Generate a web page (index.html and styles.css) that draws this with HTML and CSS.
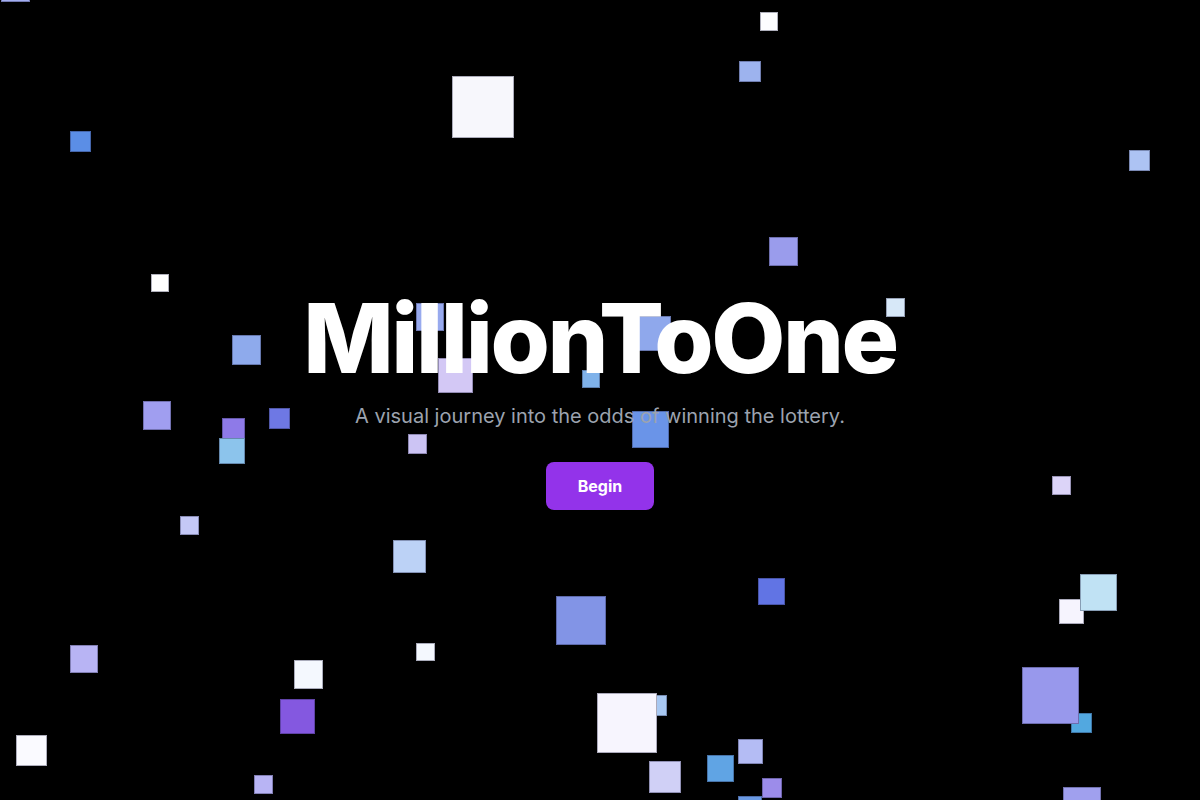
FILE: index.html
```html
<!DOCTYPE html>
<html lang="en">
<head>
<meta charset="utf-8">
<title>MillionToOne</title>
<link rel="stylesheet" href="styles.css">
</head>
<body>
<main class="stage">
  <div class="field" aria-hidden="true">
    <span class="sq" style="left:1px;top:-28px;width:29px;height:30px;background:#a3aef0"></span>
    <span class="sq" style="left:760px;top:12px;width:18px;height:19px;background:#fcfdff"></span>
    <span class="sq" style="left:739px;top:61px;width:22px;height:21px;background:#9db3ee"></span>
    <span class="sq" style="left:452px;top:76px;width:62px;height:62px;background:#f7f7fc"></span>
    <span class="sq" style="left:70px;top:131px;width:21px;height:21px;background:#5b8ee6"></span>
    <span class="sq" style="left:1129px;top:150px;width:21px;height:21px;background:#adc3f3"></span>
    <span class="sq" style="left:769px;top:237px;width:29px;height:29px;background:#9a9cec"></span>
    <span class="sq" style="left:151px;top:274px;width:18px;height:18px;background:#ffffff"></span>
    <span class="sq" style="left:886px;top:298px;width:19px;height:19px;background:#d7e8f8"></span>
    <span class="sq" style="left:416px;top:303px;width:28px;height:28px;background:#98aaee"></span>
    <span class="sq" style="left:232px;top:335px;width:29px;height:30px;background:#8eaaec"></span>
    <span class="sq" style="left:438px;top:358px;width:35px;height:35px;background:#d3c8f5"></span>
    <span class="sq" style="left:636px;top:316px;width:35px;height:35px;background:#8fa8ec"></span>
    <span class="sq" style="left:582px;top:370px;width:18px;height:18px;background:#7fb2ea"></span>
    <span class="sq" style="left:143px;top:401px;width:28px;height:29px;background:#a09ef0"></span>
    <span class="sq" style="left:269px;top:408px;width:21px;height:21px;background:#6e78e4"></span>
    <span class="sq" style="left:222px;top:418px;width:23px;height:23px;background:#8e7ae8"></span>
    <span class="sq" style="left:219px;top:438px;width:26px;height:26px;background:#8cc4ec"></span>
    <span class="sq" style="left:632px;top:411px;width:37px;height:37px;background:#6a94e8"></span>
    <span class="sq" style="left:408px;top:434px;width:19px;height:20px;background:#ccc4f4"></span>
    <span class="sq" style="left:1052px;top:476px;width:19px;height:19px;background:#dcd4f8"></span>
    <span class="sq" style="left:180px;top:516px;width:19px;height:19px;background:#c4c8f6"></span>
    <span class="sq" style="left:393px;top:540px;width:33px;height:33px;background:#bcd2f6"></span>
    <span class="sq" style="left:556px;top:596px;width:50px;height:49px;background:#8294e6"></span>
    <span class="sq" style="left:758px;top:578px;width:27px;height:27px;background:#6174e4"></span>
    <span class="sq" style="left:1059px;top:599px;width:25px;height:25px;background:#f6f4fe"></span>
    <span class="sq" style="left:1080px;top:574px;width:37px;height:37px;background:#c0e2f4"></span>
    <span class="sq" style="left:70px;top:645px;width:28px;height:28px;background:#b8b4f4"></span>
    <span class="sq" style="left:416px;top:643px;width:19px;height:18px;background:#f4f8fe"></span>
    <span class="sq" style="left:294px;top:660px;width:29px;height:29px;background:#f4f8fe"></span>
    <span class="sq" style="left:280px;top:699px;width:35px;height:35px;background:#8458e0"></span>
    <span class="sq" style="left:1071px;top:713px;width:21px;height:20px;background:#52a8e0"></span>
    <span class="sq" style="left:1022px;top:667px;width:57px;height:57px;background:#9898ec"></span>
    <span class="sq" style="left:16px;top:735px;width:31px;height:31px;background:#fafaff"></span>
    <span class="sq" style="left:646px;top:695px;width:21px;height:21px;background:#a8c8f2"></span>
    <span class="sq" style="left:597px;top:693px;width:60px;height:60px;background:#f7f5fe"></span>
    <span class="sq" style="left:738px;top:739px;width:25px;height:25px;background:#b4bcf4"></span>
    <span class="sq" style="left:707px;top:755px;width:27px;height:27px;background:#60a4e4"></span>
    <span class="sq" style="left:649px;top:761px;width:32px;height:32px;background:#d0d0f6"></span>
    <span class="sq" style="left:762px;top:778px;width:20px;height:20px;background:#9c8cea"></span>
    <span class="sq" style="left:738px;top:796px;width:24px;height:24px;background:#6a9ae4"></span>
    <span class="sq" style="left:254px;top:775px;width:19px;height:19px;background:#b8b4f4"></span>
    <span class="sq" style="left:1063px;top:787px;width:38px;height:38px;background:#a0a0ee"></span>
  </div>

  <section class="hero">
    <h1 class="title">MillionToOne</h1>
    <p class="subtitle">A visual journey into the odds of winning the lottery.</p>
    <button class="begin" type="button">Begin</button>
  </section>
</main>
</body>
</html>
```

FILE: styles.css
```css
* {
  box-sizing: border-box;
}

html,
body {
  margin: 0;
  padding: 0;
  background: #000;
  height: 100%;
}

body {
  font-family: Inter, "Noto Sans", "Liberation Sans", sans-serif;
  color: #fff;
  overflow: hidden;
}

.stage {
  position: relative;
  width: 100%;
  height: 100vh;
  display: flex;
  align-items: center;
  justify-content: center;
  overflow: hidden;
}

.field {
  position: absolute;
  inset: 0;
  z-index: 0;
}

.sq {
  position: absolute;
  display: block;
  box-shadow: inset 0 0 0 1px rgba(30, 30, 60, 0.35);
}

.hero {
  position: relative;
  z-index: 1;
  display: flex;
  flex-direction: column;
  align-items: center;
  text-align: center;
}

.title {
  margin: 0;
  font-size: 96px;
  line-height: 1;
  font-weight: 800;
  letter-spacing: -0.025em;
  color: #fff;
}

.subtitle {
  margin: 16px 0 0;
  font-size: 20px;
  line-height: 28px;
  font-weight: 400;
  color: #9ca3af;
}

.begin {
  margin-top: 32px;
  padding: 12px 32px;
  border: 0;
  border-radius: 8px;
  background: #9333ea;
  color: #fff;
  font-family: inherit;
  font-size: 16px;
  line-height: 24px;
  font-weight: 700;
  cursor: pointer;
}
```
